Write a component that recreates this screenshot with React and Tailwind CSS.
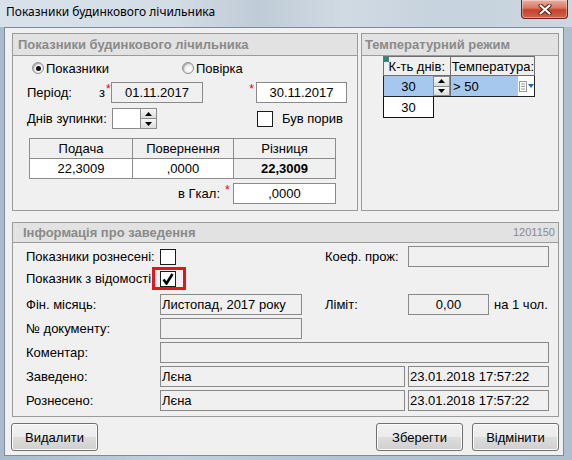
const ui = "font-['Liberation_Sans',Arial,sans-serif]"

function Star() {
  return <span className="self-start pt-[1px] text-[12px] leading-none text-[#e00000]">*</span>
}

function Field({ className = '', white, children }) {
  return (
    <div
      className={`flex h-full items-center overflow-hidden whitespace-nowrap border border-[#8a8a8a] px-[1px] leading-none ${
        white ? 'bg-white' : 'bg-[#f0f0f0]'
      } ${className}`}
    >
      {children}
    </div>
  )
}

function Arrow({ down }) {
  return (
    <svg width="7" height="4" viewBox="0 0 7 4">
      <path d={down ? 'M0 0 L7 0 L3.5 4Z' : 'M0 4 L3.5 0 L7 4Z'} fill="#000" />
    </svg>
  )
}

function Spinner({ className = '' }) {
  return (
    <div className={`flex w-[17px] flex-col ${className}`}>
      <div className="flex flex-1 items-center justify-center border border-[#8c8c8c] bg-[linear-gradient(#f7f7f7,#dcdcdc)]">
        <Arrow />
      </div>
      <div className="flex flex-1 items-center justify-center border border-t-0 border-[#8c8c8c] bg-[linear-gradient(#f7f7f7,#dcdcdc)]">
        <Arrow down />
      </div>
    </div>
  )
}

function Radio({ checked }) {
  return (
    <span className="flex h-[12px] w-[12px] shrink-0 items-center justify-center rounded-full border border-[#8e8f8f] bg-[radial-gradient(circle_at_60%_60%,#ffffff,#dadada)] shadow-[inset_1px_1px_1px_rgba(0,0,0,0.25)]">
      {checked ? <span className="h-[5px] w-[5px] rounded-full bg-[#111]" /> : null}
    </span>
  )
}

function Check({ checked }) {
  return (
    <span className="flex h-[16px] w-[16px] shrink-0 items-center justify-center border border-[#1c1c1c] bg-white">
      {checked ? (
        <svg width="12" height="12" viewBox="0 0 12 12">
          <path d="M1.5 6.5 L4.5 10.5 L10.5 1" fill="none" stroke="#000" strokeWidth="2.6" />
        </svg>
      ) : null}
    </span>
  )
}

function GroupBox({ title, right, headerHeight = 'h-[22px]', pad = 'px-[5px]', className = '', children }) {
  return (
    <div className={`flex flex-col border border-[#9b9b9b] ${className}`}>
      <div
        className={`flex shrink-0 items-center justify-between border-b border-[#9b9b9b] bg-[#e2e2e2] ${headerHeight} ${pad}`}
      >
        <span className="text-[13px] font-bold leading-none text-[#8a8a8a]">{title}</span>
        {right}
      </div>
      {children}
    </div>
  )
}

function Button({ children }) {
  return (
    <button className="flex h-[28px] w-[87px] items-center justify-center rounded-[3px] border border-[#707070] bg-[linear-gradient(#f2f2f2_0%,#ebebeb_50%,#dddddd_51%,#cfcfcf_100%)] text-[13px] text-black shadow-[inset_0_0_0_1px_#fcfcfc]">
      {children}
    </button>
  )
}

export default function App() {
  return (
    <div
      className={`flex h-[460px] w-[572px] flex-col overflow-hidden bg-[linear-gradient(90deg,#a9bbcb_0%,#c3d0dc_30%,#b3c3d2_60%,#aebfcf_100%)] ${ui}`}
    >
      <div className="flex h-[27px] shrink-0 items-start bg-[linear-gradient(90deg,#d9e2ea_0%,#d3dde6_30%,#bfcbd6_45%,#d0dae3_60%,#c6d2dd_78%,#ccd7e1_100%)]">
        <span className="pl-[6px] pt-[6px] font-['Noto_Sans',sans-serif] text-[12px] leading-none text-black">
          Показники будинкового лічильника
        </span>
        <button className="ml-auto mr-[4px] flex h-[19px] w-[47px] items-center justify-center rounded-b-[4px] border border-t-0 border-[#6e2418] bg-[linear-gradient(#eab0a2_0%,#d9755e_45%,#c5432b_55%,#d0654a_100%)] shadow-[inset_0_0_0_1px_rgba(255,255,255,0.35)]">
          <svg width="14" height="11" viewBox="0 0 14 11">
            <path d="M2.5 1.5 L11.5 9.5 M11.5 1.5 L2.5 9.5" stroke="#4a1a12" strokeWidth="4" strokeLinecap="round" />
            <path d="M2.5 1.5 L11.5 9.5 M11.5 1.5 L2.5 9.5" stroke="#ffffff" strokeWidth="2.2" strokeLinecap="round" />
          </svg>
        </button>
      </div>

      <div className="ml-[4px] flex h-[429px] w-[560px] flex-col border border-[#7d8c9a] bg-[#f0f0f0] pl-[7px] pt-[5px] text-[13px] leading-none text-black">
        <div className="flex gap-[3px]">
          <GroupBox title="Показники будинкового лічильника" className="h-[178px] w-[346px]">
            <div className="flex h-[18px] items-center pl-[19px] mt-[3px]">
              <div className="flex w-[150px] items-center gap-[2px]">
                <Radio checked />
                <span>Показники</span>
              </div>
              <div className="flex items-center gap-[2px]">
                <Radio />
                <span>Повірка</span>
              </div>
            </div>

            <div className="mt-[5px] flex h-[21px] items-center pl-[14px]">
              <span className="w-[72px]">Період:</span>
              <span className="w-[7px]">з</span>
              <span className="flex h-full w-[5px]">
                <Star />
              </span>
              <Field className="w-[92px] justify-center">01.11.2017</Field>
              <span className="flex h-full w-[53px] justify-end pr-[2px]">
                <Star />
              </span>
              <Field white className="w-[91px] justify-center">
                30.11.2017
              </Field>
            </div>

            <div className="mt-[5px] flex h-[21px] items-center pl-[14px]">
              <span className="w-[85px]">Днів зупинки:</span>
              <Field white className="w-[28px] border-r-0" />
              <Spinner className="h-full" />
              <span className="ml-[100px]">
                <Check />
              </span>
              <span className="ml-[9px]">Був порив</span>
            </div>

            <div className="ml-[16px] mt-[9px] flex w-[307px] flex-col border-l border-t border-[#8c8c8c]">
              <div className="flex h-[20px]">
                <div className="flex w-[103px] items-center justify-center border-b border-r border-[#8c8c8c]">Подача</div>
                <div className="flex w-[101px] items-center justify-center border-b border-r border-[#8c8c8c]">
                  Повернення
                </div>
                <div className="flex w-[102px] items-center justify-center border-b border-r border-[#8c8c8c]">Різниця</div>
              </div>
              <div className="flex h-[20px]">
                <div className="flex w-[103px] items-center justify-center border-b border-r border-[#8c8c8c] bg-white">
                  22,3009
                </div>
                <div className="flex w-[101px] items-center justify-center border-b border-r border-[#8c8c8c] bg-white">
                  ,0000
                </div>
                <div className="flex w-[102px] items-center justify-center border-b border-r border-[#8c8c8c] font-bold">
                  22,3009
                </div>
              </div>
            </div>

            <div className="mt-[4px] flex h-[21px] items-center justify-end pr-[21px]">
              <span className="mr-[5px]">в Гкал:</span>
              <span className="flex h-full w-[8px]">
                <Star />
              </span>
              <Field white className="w-[103px] justify-center">
                ,0000
              </Field>
            </div>
          </GroupBox>

          <GroupBox title="Температурний режим" pad="px-[3px]" className="h-[178px] w-[198px]">
            <div className="ml-[21px] flex w-[152px] flex-col">
              <div className="relative flex h-[20px] border border-[#6e6e6e] bg-[#f0f0f0]">
                <span className="absolute -left-px -top-px h-[6px] w-[6px] border border-[#5a7a7a] bg-[#1f8c86]" />
                <div className="flex w-[67px] items-center justify-center border-r border-[#6e6e6e]">К-ть днів:</div>
                <div className="flex flex-1 items-center pl-[1px]">Температура:</div>
              </div>
              <div className="flex h-[21px] border-x border-b border-[#222] bg-[#a6c8ef]">
                <div className="flex w-[49px] items-center justify-center">30</div>
                <Spinner className="h-full" />
                <div className="flex flex-1 items-center border-l border-[#6e6e6e] pl-[2px]">
                  <span>&gt; 50</span>
                  <span className="ml-auto flex h-full w-[16px] items-center justify-center gap-[1px] bg-white">
                    <svg width="8" height="11" viewBox="0 0 8 11">
                      <rect x="0.5" y="0.5" width="7" height="10" fill="#fff" stroke="#9a9a9a" />
                      <path d="M2 3 H6 M2 5.5 H6 M2 8 H6" stroke="#9a9a9a" />
                    </svg>
                    <svg width="6" height="4" viewBox="0 0 6 4">
                      <path d="M0 0 H6 L3 4Z" fill="#1e5fd0" />
                    </svg>
                  </span>
                </div>
              </div>
              <div className="flex h-[21px] w-[51px] items-center justify-center border-x border-b border-[#111] bg-white">
                30
              </div>
            </div>
          </GroupBox>
        </div>

        <GroupBox
          title="Інформація про заведення"
          headerHeight="h-[20px]"
          pad="pl-[10px] pr-[3px]"
          className="mt-[11px] h-[195px] w-[547px]"
          right={<span className="text-[11px] leading-none text-[#8a8a8a]">1201150</span>}
        >
          <div className="flex flex-col pl-[13px]">
            <div className="mt-[3px] flex h-[21px] items-center">
              <span className="w-[134px]">Показники рознесені:</span>
              <Check />
              <span className="ml-[149px] w-[83px]">Коеф. прож:</span>
              <Field className="w-[141px]" />
            </div>
            <div className="flex h-[23px] items-center">
              <span className="w-[126px]">Показник з відомості</span>
              <span className="flex h-[23px] w-[34px] items-center border-[3px] border-[#e4161b] pl-[5px]">
                <Check checked />
              </span>
            </div>
            <div className="mt-[4px] flex h-[21px] items-center">
              <span className="w-[134px]">Фін. місяць:</span>
              <Field className="w-[142px]">Листопад, 2017 року</Field>
              <span className="ml-[23px] w-[83px]">Ліміт:</span>
              <Field className="w-[81px] justify-center">0,00</Field>
              <span className="ml-[5px]">на 1 чол.</span>
            </div>
            <div className="mt-[3px] flex h-[21px] items-center">
              <span className="w-[134px]">№ документу:</span>
              <Field className="w-[142px]" />
            </div>
            <div className="mt-[3px] flex h-[21px] items-center">
              <span className="w-[134px]">Коментар:</span>
              <Field className="w-[389px]" />
            </div>
            <div className="mt-[3px] flex h-[21px] items-center">
              <span className="w-[134px]">Заведено:</span>
              <Field className="w-[245px]">Лєна</Field>
              <Field className="ml-[3px] w-[141px]">23.01.2018 17:57:22</Field>
            </div>
            <div className="mt-[3px] flex h-[21px] items-center">
              <span className="w-[134px]">Рознесено:</span>
              <Field className="w-[245px]">Лєна</Field>
              <Field className="ml-[3px] w-[141px]">23.01.2018 17:57:22</Field>
            </div>
          </div>
        </GroupBox>

        <div className="-ml-px mt-[6px] flex w-[548px] items-center">
          <Button>Видалити</Button>
          <div className="ml-auto flex gap-[9px]">
            <Button>Зберегти</Button>
            <Button>Відмінити</Button>
          </div>
        </div>
      </div>
    </div>
  )
}
